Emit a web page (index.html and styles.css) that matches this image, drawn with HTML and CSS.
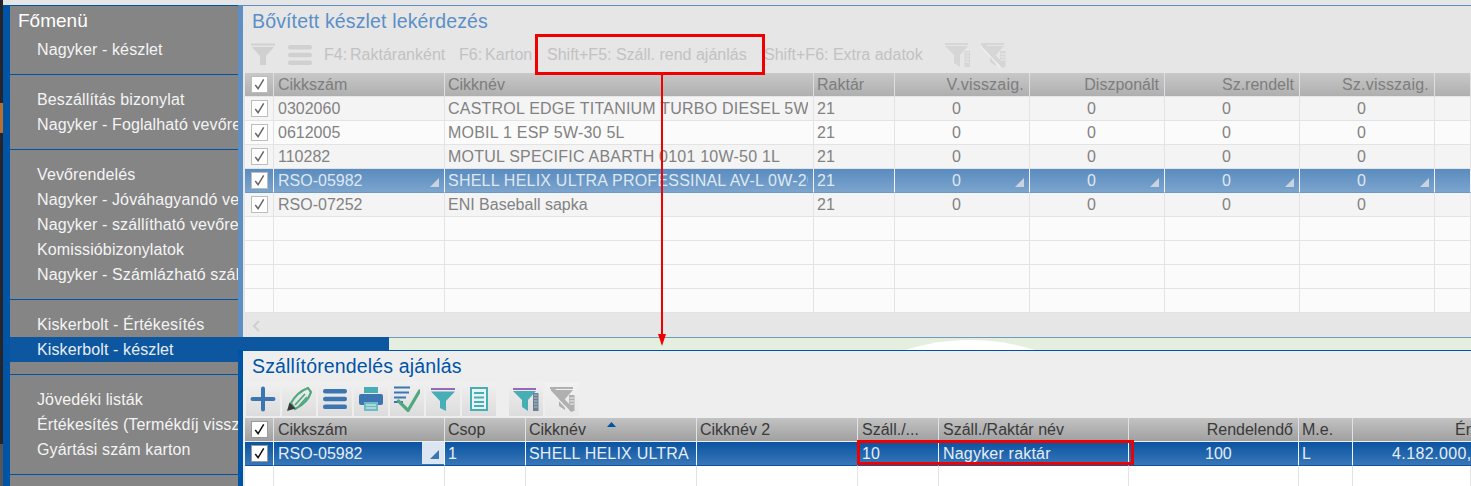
FILE: index.html
```html
<!DOCTYPE html>
<html lang="hu">
<head>
<meta charset="utf-8">
<title>Szállítórendelés ajánlás</title>
<link rel="stylesheet" href="styles.css">
</head>
<body>
<svg width="0" height="0" class="defs">
  <defs>
    <symbol id="chk" viewBox="0 0 16 16"><path d="M3.500 8.500 L6.500 12.500 L12.500 2.500" fill="none" stroke="currentColor" stroke-width="1.600"/></symbol>
    <symbol id="funnel" viewBox="0 0 26 26"><rect x="1" y="1.500" width="24" height="2" fill="currentColor"/><path d="M2 5H24L16 14V23L10 23V14Z" fill="currentColor"/></symbol>
    <symbol id="bars" viewBox="0 0 26 26"><rect x="1" y="3" width="24" height="4.500" rx="2.200" fill="currentColor"/><rect x="1" y="10.800" width="24" height="4.500" rx="2.200" fill="currentColor"/><rect x="1" y="18.600" width="24" height="4.500" rx="2.200" fill="currentColor"/></symbol>
    <symbol id="funnel-list" viewBox="0 0 26 26"><rect x="0" y="2" width="23" height="2" fill="#9a68b8"/><path d="M0 5H23L15 14V25L9 21V14Z" fill="#48aeb6"/><rect x="20" y="7" width="5.500" height="18" fill="#6f7f90"/><path d="M21 9h3.500M21 12h3.500M21 15h3.500M21 18h3.500M21 21h3.500" stroke="#a9c3e2" stroke-width="1.200"/></symbol>
    <symbol id="funnel-list-off" viewBox="0 0 26 26"><rect x="0" y="1" width="23" height="2" fill="currentColor"/><path d="M0 4H23L15 13V25L9 21V13Z" fill="currentColor"/><rect x="19.500" y="9" width="5.500" height="16" fill="currentColor"/><path d="M20.500 11h3.500M20.500 14h3.500M20.500 17h3.500M20.500 20h3.500" stroke="#ececec" stroke-width="1"/></symbol>
    <symbol id="funnel-off" viewBox="0 0 26 26"><rect x="1" y="1" width="23" height="2" fill="currentColor"/><path d="M1 4H24L16 13V24L10 20V13Z" fill="currentColor"/><rect x="20" y="9" width="5.500" height="16" fill="currentColor"/><path d="M20.500 12h4.500M20.500 15h4.500M20.500 18h4.500" stroke="#ececec" stroke-width="1"/><path d="M0.500 4 L21 26" stroke="#eeeeee" stroke-width="1.500"/><path d="M3 2.500 L24 25" stroke="currentColor" stroke-width="4"/></symbol>
  </defs>
</svg>

<div class="app">
  <div class="edge">
    <div class="edge-dark"></div>
    <div class="edge-orange"></div>
    <div class="edge-dark2"></div>
    <div class="edge-grey"></div>
  </div>
  <div class="workspace">
    <div class="topstrip"></div>
    <div class="frame">
      <nav class="sidebar">
        <div class="menu-title">Főmenü</div>
        <div class="group first">
          <div class="item">Nagyker - készlet</div>
        </div>
        <div class="group">
          <div class="item">Beszállítás bizonylat</div>
          <div class="item">Nagyker - Foglalható vevőre</div>
        </div>
        <div class="group">
          <div class="item">Vevőrendelés</div>
          <div class="item">Nagyker - Jóváhagyandó ve</div>
          <div class="item">Nagyker - szállítható vevőre</div>
          <div class="item">Komissióbizonylatok</div>
          <div class="item">Nagyker - Számlázható szál</div>
        </div>
        <div class="group">
          <div class="item">Kiskerbolt - Értékesítés</div>
          <div class="item active">Kiskerbolt - készlet</div>
        </div>
        <div class="group">
          <div class="item">Jövedéki listák</div>
          <div class="item">Értékesítés (Termékdíj vissz</div>
          <div class="item">Gyártási szám karton</div>
        </div>
      </nav>

      <main class="content">
        <section class="panel upper">
          <h2 class="panel-title">Bővített készlet lekérdezés</h2>
          <div class="cmdbar">
            <svg class="cmd-icon"><use href="#funnel"/></svg>
            <svg class="cmd-icon"><use href="#bars"/></svg>
            <span class="cmd f4">F4: Raktáranként</span>
            <span class="cmd f6">F6: Karton</span>
            <span class="cmd sf5">Shift+F5: Száll. rend ajánlás</span>
            <span class="cmd sf6">Shift+F6: Extra adatok</span>
            <svg class="cmd-icon off"><use href="#funnel-list-off"/></svg>
            <svg class="cmd-icon off"><use href="#funnel-off"/></svg>
          </div>
          <div class="table up">
            <div class="row head">
              <div class="cell tick"><span class="box"><svg><use href="#chk"/></svg></span></div>
              <div class="cell code">Cikkszám</div><div class="cell">Cikknév</div><div class="cell">Raktár</div>
              <div class="cell right spaced">V.visszaig.</div><div class="cell right">Diszponált</div><div class="cell right">Sz.rendelt</div><div class="cell right spaced">Sz.visszaig.</div><div class="cell"></div>
            </div>
            <div class="row odd">
              <div class="cell tick"><span class="box"><svg><use href="#chk"/></svg></span></div>
              <div class="cell code">0302060</div><div class="cell"><span class="caps">CASTROL EDGE TITANIUM TURBO DIESEL 5W-40</span></div><div class="cell">21</div>
              <div class="cell num">0</div><div class="cell num">0</div><div class="cell num">0</div><div class="cell num">0</div><div class="cell"></div>
            </div>
            <div class="row">
              <div class="cell tick"><span class="box"><svg><use href="#chk"/></svg></span></div>
              <div class="cell code">0612005</div><div class="cell"><span class="caps">MOBIL 1 ESP 5W-30 5L</span></div><div class="cell">21</div>
              <div class="cell num">0</div><div class="cell num">0</div><div class="cell num">0</div><div class="cell num">0</div><div class="cell"></div>
            </div>
            <div class="row odd">
              <div class="cell tick"><span class="box"><svg><use href="#chk"/></svg></span></div>
              <div class="cell code">110282</div><div class="cell"><span class="caps">MOTUL SPECIFIC ABARTH 0101 10W-50 1L</span></div><div class="cell">21</div>
              <div class="cell num">0</div><div class="cell num">0</div><div class="cell num">0</div><div class="cell num">0</div><div class="cell"></div>
            </div>
            <div class="row sel">
              <div class="cell tick"><span class="box"><svg><use href="#chk"/></svg></span></div>
              <div class="cell code mark">RSO-05982</div><div class="cell"><span class="caps">SHELL HELIX ULTRA PROFESSINAL AV-L 0W-20</span></div><div class="cell">21</div>
              <div class="cell num mark">0</div><div class="cell num mark">0</div><div class="cell num mark">0</div><div class="cell num mark">0</div><div class="cell"></div>
            </div>
            <div class="row odd">
              <div class="cell tick"><span class="box"><svg><use href="#chk"/></svg></span></div>
              <div class="cell code">RSO-07252</div><div class="cell">ENI Baseball sapka</div><div class="cell">21</div>
              <div class="cell num">0</div><div class="cell num">0</div><div class="cell num">0</div><div class="cell num">0</div><div class="cell"></div>
            </div>
            <div class="row"><div class="cell tick"></div><div class="cell"></div><div class="cell"></div><div class="cell"></div><div class="cell"></div><div class="cell"></div><div class="cell"></div><div class="cell"></div><div class="cell"></div></div>
            <div class="row"><div class="cell tick"></div><div class="cell"></div><div class="cell"></div><div class="cell"></div><div class="cell"></div><div class="cell"></div><div class="cell"></div><div class="cell"></div><div class="cell"></div></div>
            <div class="row"><div class="cell tick"></div><div class="cell"></div><div class="cell"></div><div class="cell"></div><div class="cell"></div><div class="cell"></div><div class="cell"></div><div class="cell"></div><div class="cell"></div></div>
            <div class="row"><div class="cell tick"></div><div class="cell"></div><div class="cell"></div><div class="cell"></div><div class="cell"></div><div class="cell"></div><div class="cell"></div><div class="cell"></div><div class="cell"></div></div>
          </div>
          <div class="hscroll">
            <svg width="10" height="14" viewBox="0 0 10 14"><path d="M8 2 L3 7 L8 12" fill="none" stroke="#cfcfcf" stroke-width="2"/></svg>
          </div>
        </section>

        <div class="strip">
          <div class="strip-blue"></div>
          <div class="strip-green"><div class="arc"></div></div>
        </div>

        <section class="panel lower">
          <h2 class="panel-title">Szállítórendelés ajánlás</h2>
          <div class="toolbar">
            <button class="tbtn"><svg viewBox="0 0 26 26"><path d="M13 2.500V23.500M2.500 13H23.500" stroke="#3b76b3" stroke-width="4" stroke-linecap="round"/></svg></button>
            <button class="tbtn"><svg viewBox="0 0 26 26"><path d="M5 17 C9 10 14 5 22 2 L25 6 C23 13 17 19 9 23 Z" fill="none" stroke="#4fa87e" stroke-width="2.200"/><path d="M9 19 L19 8 M13 20 L21 11" stroke="#4fa87e" stroke-width="1.800"/><path d="M1 25 L3.500 16.500 L9.500 22.500 Z" fill="#3a3a3a"/></svg></button>
            <button class="tbtn"><svg class="blue"><use href="#bars"/></svg></button>
            <button class="tbtn"><svg viewBox="0 0 26 26"><rect x="6" y="1" width="14" height="6" fill="#48aeb6"/><path d="M3 8H23A2 2 0 0 1 25 10V17A2 2 0 0 1 23 19H3A2 2 0 0 1 1 17V10A2 2 0 0 1 3 8Z" fill="#3b76b3"/><rect x="6" y="16" width="14" height="9" fill="#6cbcc2"/><path d="M8 19H18M8 22H18" stroke="#eaf4f5" stroke-width="1"/></svg></button>
            <button class="tbtn"><svg viewBox="0 0 26 26"><path d="M0 1.500H16M0 6.500H15M0 11.500H12M0 16H9" stroke="#3b76b3" stroke-width="2"/><path d="M4.500 15 L14 24.500 L25.500 5" fill="none" stroke="#4fa87e" stroke-width="3.200" stroke-linecap="round"/></svg></button>
            <button class="tbtn"><svg viewBox="0 0 26 26"><rect x="1" y="2" width="24" height="2" fill="#9a68b8"/><path d="M1 5.500H25L16 15V25L10 22V15Z" fill="#48aeb6"/></svg></button>
            <button class="tbtn"><svg viewBox="0 0 26 26"><rect x="4" y="1" width="18" height="24" fill="#48aeb6"/><rect x="6" y="3" width="14" height="20" fill="#e8f3f4"/><path d="M8 7H18M8 11.500H18M8 16H18M8 20H18" stroke="#48aeb6" stroke-width="2"/></svg></button>
            <button class="tbtn sep"><svg><use href="#funnel-list"/></svg></button>
            <button class="tbtn pale"><svg class="grey"><use href="#funnel-off"/></svg></button>
          </div>
          <div class="table down">
            <div class="row head">
              <div class="cell tick"><span class="box"><svg><use href="#chk"/></svg></span></div>
              <div class="cell code">Cikkszám</div><div class="cell">Csop</div><div class="cell sorted">Cikknév<i class="sort"></i></div><div class="cell">Cikknév 2</div><div class="cell wide">Száll./...</div><div class="cell wide">Száll./Raktár név</div><div class="cell right">Rendelendő</div><div class="cell">M.e.</div><div class="cell value-h">Érték</div>
            </div>
            <div class="row sel">
              <div class="cell tick"><span class="box"><svg><use href="#chk"/></svg></span></div>
              <div class="cell code boxed">RSO-05982<span class="corner"><i></i></span></div><div class="cell">1</div><div class="cell tracked">SHELL HELIX ULTRA</div><div class="cell"></div><div class="cell wide">10</div><div class="cell wide tracked">Nagyker raktár</div><div class="cell qty">100</div><div class="cell">L</div><div class="cell value">4.182.000,00</div>
            </div>
            <div class="row blank"><div class="cell tick"></div><div class="cell"></div><div class="cell"></div><div class="cell"></div><div class="cell"></div><div class="cell"></div><div class="cell"></div><div class="cell"></div><div class="cell"></div><div class="cell"></div></div>
          </div>
        </section>
      </main>
    </div>
  </div>
</div>

<div class="callout top"></div>
<div class="callout bottom"></div>
<svg class="arrow" width="14" height="274" viewBox="0 0 14 274"><path d="M7 0V262" stroke="#f00000" stroke-width="2"/><path d="M3 260H11L7 272Z" fill="#f00000"/></svg>
</body>
</html>
```

FILE: styles.css
```css
* { box-sizing: border-box; }
html, body { margin: 0; padding: 0; height: 486px; overflow: hidden; background: #fff; }
body { font-family: "Liberation Sans", Arial, sans-serif; font-size: 16px; position: relative; }
.defs { position: absolute; }

.app { display: flex; width: 1471px; height: 486px; }
.edge { width: 3px; display: flex; flex-direction: column; flex: none; }
.edge-dark { height: 103px; background: #26262a; }
.edge-orange { height: 30px; background: #b56f2e; }
.edge-dark2 { height: 311px; background: #26262a; }
.edge-grey { flex: 1; background: #565656; }

.workspace { flex: 1; display: flex; flex-direction: column; min-width: 0; }
.topstrip { height: 5px; background: #e6e6e6; flex: none; }
.frame { flex: 1; display: flex; min-height: 0; background: #0054a6; padding-left: 7px; }

.sidebar { width: 228px; flex: none; background: #858585; color: #f4f4f4; overflow: hidden; border-top: 1px solid #0054a6; letter-spacing: 0.12px; }
.menu-title { font-size: 19px; line-height: 30px; padding-left: 8px; color: #fff; letter-spacing: 0; }
.group { padding: 12px 0; border-bottom: 1px solid #0054a6; }
.group.first { padding-top: 0; margin-top: 1px; }
.item { height: 25px; line-height: 25px; padding-left: 27px; white-space: nowrap; overflow: hidden; }
.item.active { background: #0d57a0; color: #e8eef6; }

.content { flex: 1; min-width: 0; display: flex; flex-direction: column; }
.panel-title { margin: 0; font-weight: normal; font-size: 19.5px; line-height: 30px; padding-left: 9px; letter-spacing: 0.15px; }

.upper { height: 332px; flex: none; background: #e6e6e6; border-left: 5px solid #5f8fc2; border-top: 1px solid #5f8fc2; display: flex; flex-direction: column; }
.upper .panel-title { color: #5b8fc7; }
.cmdbar { height: 37px; display: flex; align-items: center; color: #c2c2c2; font-size: 16px; padding-left: 7px; white-space: nowrap; flex: none; }
.cmd-icon { width: 26px; height: 26px; color: #d0d0d0; margin-right: 11px; flex: none; }
.cmd-icon.off { margin-right: 9px; color: #d6d6d6; }
.cmd { flex: none; }
.cmd.f4 { width: 135px; word-spacing: -1.500px; }
.cmd.f6 { width: 88px; word-spacing: -1.500px; }
.cmd.sf5 { width: 217px; }
.cmd.sf6 { width: 181px; }

.table { overflow: hidden; flex: none; margin-left: 2px; }
.row { display: grid; height: 24px; }
.up .row { grid-template-columns: 29px 171px 369px 81px 135px 135px 135px 135px 1fr; }
.down .row { grid-template-columns: 29px 171px 81px 171px 161px 81px 190px 170px 54px 1fr; }
.cell { line-height: 23px; padding-left: 3px; white-space: nowrap; overflow: hidden; position: relative; border-right: 1px solid #e3e3e3; border-bottom: 1px solid #e3e3e3; }
.cell.code { padding-left: 4px; }
.cell.right { text-align: right; padding-right: 5px; padding-left: 0; }
.cell.spaced { letter-spacing: 0.22px; }
.cell.num { padding-left: 57px; }
.cell.wide { padding-left: 4px; }
.tracked { letter-spacing: 0.2px; }
.caps { display: block; overflow: hidden; margin-right: 5px; letter-spacing: 0.22px; }
.tick { padding: 0; display: flex; align-items: center; justify-content: center; }
.box { width: 17px; height: 17px; display: block; background: #fff; border: 1px solid #bdbdbd; color: #666; }
.box svg { display: block; width: 15px; height: 15px; }

.up { color: #828282; }
.up .row { background: #fbfbfb; }
.up .row.odd { background: #f4f4f4; }
.up .row.head { background: linear-gradient(#c8c8c8, #aeaeae); color: #7d7d7d; }
.up .row.head .cell { border-color: #dedede; border-bottom-color: #e6e6e6; }
.up .row.sel { background: linear-gradient(#5a8cbf, #7da5ce); color: #dfe8f2; }
.up .row.sel .cell { border-color: #f2f2f2; border-bottom-color: #6e98c6; }
.mark::after { content: ""; position: absolute; right: 5px; bottom: 5px; width: 9px; height: 9px; background: #c9d4e0; clip-path: polygon(100% 0, 100% 100%, 0 100%); }

.hscroll { flex: 1; padding: 6px 0 0 8px; background: #e6e6e6; }
.hscroll svg { display: block; }

.strip { height: 14px; flex: none; display: flex; border-bottom: 1px solid #0054a6; }
.strip-blue { width: 151px; background: #0d57a0; flex: none; }
.strip-green { flex: 1; background: #e4efe0; position: relative; overflow: hidden; border-top: 1px solid #6f9bbd; }
.arc { position: absolute; left: 365px; top: 2px; width: 432px; height: 432px; background: #fff; border-radius: 50%; }

.lower { flex: 1; min-height: 0; background: #eeeeee; border-left: 5px solid #0054a6; display: flex; flex-direction: column; }
.lower .panel-title { color: #0054a6; height: 31px; }
.toolbar { display: flex; gap: 2px; padding-left: 3px; height: 36px; flex: none; }
.tbtn { width: 34px; height: 34px; padding: 4px; border: 0; background: linear-gradient(#f0f0f0, #dcdcdc); display: block; }
.tbtn svg { display: block; width: 26px; height: 26px; }
.tbtn .blue { color: #3b76b3; }
.tbtn .grey { color: #b0b0b0; }
.tbtn.sep { margin-left: 11px; }
.tbtn.pale { background: linear-gradient(#f2f2f2, #e8e8e8); }

.down { color: #333; background: #fff; flex: 1; }
.down .row { background: #fff; }
.down .row.head { background: linear-gradient(#c2c2c2, #9e9e9e); color: #3a3a3a; }
.down .row.head .cell { border-color: #e2e2e2; border-bottom-color: #eeeeee; }
.down .row.sel { background: linear-gradient(#0a54a2, #3a78b8); color: #e6edf5; }
.down .row.sel .cell { border-color: #f0f4f8; border-bottom-color: #0a54a2; }
.down .box { color: #111; border-color: #999; }
.down .row.blank { height: 40px; }
.sort { position: absolute; left: 81px; top: 4px; width: 9px; height: 5px; background: #0054a6; clip-path: polygon(50% 0, 100% 100%, 0 100%); }
.corner { position: absolute; right: 0; top: 0; bottom: 1px; width: 22px; background: #dce6f2; }
.corner i { position: absolute; right: 5px; bottom: 5px; width: 9px; height: 9px; background: #3b76b3; clip-path: polygon(100% 0, 100% 100%, 0 100%); }
.cell.qty { padding-left: 76px; }
.cell.value { padding-left: 39px; border-right: 0; letter-spacing: 0.4px; }
.cell.value-h { padding-left: 102px; border-right: 0; }

.callout { position: absolute; border: 3px solid #f00000; }
.callout.top { left: 535px; top: 34px; width: 230px; height: 41px; }
.callout.bottom { left: 857px; top: 440px; width: 277px; height: 25px; }
.arrow { position: absolute; left: 655px; top: 74px; }
```
